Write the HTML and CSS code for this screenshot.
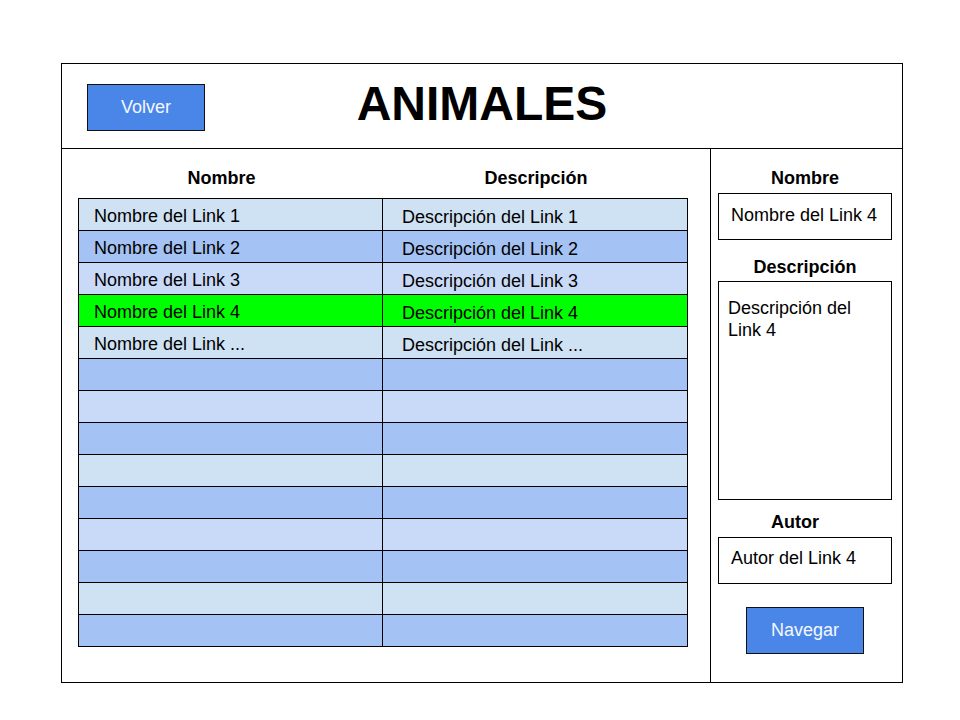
FILE: index.html
```html
<!DOCTYPE html>
<html lang="es">
<head>
<meta charset="utf-8">
<title>Animales</title>
<link rel="stylesheet" href="styles.css">
</head>
<body>
<div class="frame">
  <header class="top">
    <button class="btn btn-back">Volver</button>
    <h1 class="title">ANIMALES</h1>
    <div></div>
  </header>
  <main class="main">
    <section class="list">
      <div class="heads">
        <div class="head head-name">Nombre</div>
        <div class="head head-desc">Descripción</div>
      </div>
      <div class="grid">
        <div class="cell c1 r-a">Nombre del Link 1</div><div class="cell c2 r-a">Descripción del Link 1</div>
        <div class="cell c1 r-b">Nombre del Link 2</div><div class="cell c2 r-b">Descripción del Link 2</div>
        <div class="cell c1 r-c">Nombre del Link 3</div><div class="cell c2 r-c">Descripción del Link 3</div>
        <div class="cell c1 r-sel">Nombre del Link 4</div><div class="cell c2 r-sel">Descripción del Link 4</div>
        <div class="cell c1 r-a">Nombre del Link ...</div><div class="cell c2 r-a">Descripción del Link ...</div>
        <div class="cell c1 r-b"></div><div class="cell c2 r-b"></div>
        <div class="cell c1 r-c"></div><div class="cell c2 r-c"></div>
        <div class="cell c1 r-b"></div><div class="cell c2 r-b"></div>
        <div class="cell c1 r-a"></div><div class="cell c2 r-a"></div>
        <div class="cell c1 r-b"></div><div class="cell c2 r-b"></div>
        <div class="cell c1 r-c"></div><div class="cell c2 r-c"></div>
        <div class="cell c1 r-b"></div><div class="cell c2 r-b"></div>
        <div class="cell c1 r-a"></div><div class="cell c2 r-a"></div>
        <div class="cell c1 r-b"></div><div class="cell c2 r-b"></div>
      </div>
    </section>
    <aside class="detail">
      <div class="label label-name">Nombre</div>
      <div class="box box-name">Nombre del Link 4</div>
      <div class="label label-desc">Descripción</div>
      <div class="box box-desc">Descripción del Link 4</div>
      <div class="label label-author">Autor</div>
      <div class="box box-author">Autor del Link 4</div>
      <button class="btn btn-go">Navegar</button>
    </aside>
  </main>
</div>
</body>
</html>
```
FILE: styles.css
```css
* { box-sizing: border-box; }
html, body { margin: 0; padding: 0; background: #fff; }
body {
  font-family: "Liberation Sans", Arial, sans-serif;
  color: #000;
}
.frame {
  margin: 63px 0 0 61px;
  width: 842px;
  height: 620px;
  border: 1px solid #000;
  display: flex;
  flex-direction: column;
}
.top {
  height: 85px;
  border-bottom: 1px solid #000;
  display: grid;
  grid-template-columns: 1fr auto 1fr;
  align-items: start;
}
.btn {
  font-family: "Liberation Sans", Arial, sans-serif;
  font-size: 18px;
  color: #f4f8ff;
  background: #4a86e8;
  border: 1px solid #111;
  border-radius: 0;
  width: 118px;
  height: 47px;
  padding: 0;
  cursor: pointer;
}
.btn-back {
  margin: 20px 0 0 25px;
}
.title {
  margin: 0;
  padding: 16px 0 0 0;
  font-size: 48px;
  line-height: 48px;
  font-weight: bold;
}
.main {
  flex: 1;
  display: flex;
}
.list {
  width: 649px;
  border-right: 1px solid #000;
  padding: 19px 0 0 16px;
}
.heads {
  display: grid;
  grid-template-columns: 304px 305px;
  height: 30px;
}
.head {
  font-size: 18px;
  line-height: 21px;
  font-weight: bold;
  text-align: center;
}
.head-name { padding-right: 17px; }
.head-desc { padding-left: 3px; }
.grid {
  display: grid;
  grid-template-columns: 304px 305px;
  width: 610px;
  border-top: 1px solid #000;
  border-left: 1px solid #000;
}
.cell {
  height: 32px;
  border-right: 1px solid #000;
  border-bottom: 1px solid #000;
  font-size: 18px;
  line-height: 28px;
  padding-top: 3px;
  white-space: nowrap;
}
.c1 { padding-left: 15px; }
.c2 { padding-left: 19px; padding-top: 4px; }
.r-a { background: #cfe2f3; }
.r-b { background: #a4c2f4; }
.r-c { background: #c9daf8; }
.r-sel { background: #00ff00; }
.detail {
  flex: 1;
  display: flex;
  flex-direction: column;
  padding: 19px 0 0 7px;
}
.label {
  width: 174px;
  font-size: 18px;
  line-height: 21px;
  font-weight: bold;
  text-align: center;
}
.label-desc { margin-top: 17px; }
.label-author { margin-top: 12px; padding-right: 20px; }
.box {
  width: 174px;
  border: 1px solid #000;
  background: #fff;
  font-size: 18px;
  line-height: 22px;
  margin-top: 4px;
}
.box-name { height: 47px; padding: 10px 0 0 12px; }
.box-desc { height: 219px; padding: 15px 26px 0 9px; margin-top: 3px; }
.box-author { height: 47px; padding: 9px 0 0 12px; }
.btn-go {
  margin: 23px 0 0 28px;
}
```
